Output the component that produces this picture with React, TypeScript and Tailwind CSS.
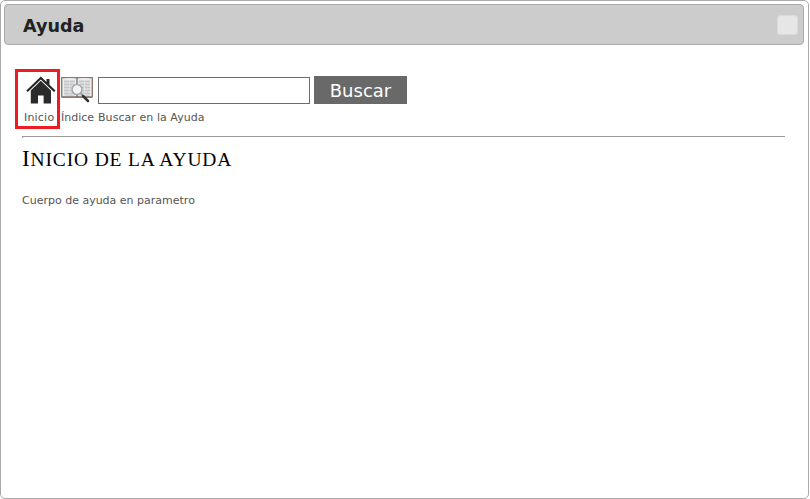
function HomeIcon() {
  return (
    <svg width="30" height="28" viewBox="0 0 30 28" className="block">
      <path d="M14.8 0.5 L20.5 5.9 V3 H23.5 V8.8 L29.5 14.5 L28 16 L14.8 3.6 L1.8 16 L0.4 14.5 Z" fill="#242424" />
      <path d="M14.8 4.8 L25 14.4 V27.6 H17.6 V19.6 H12 V27.6 H4.8 V14.4 Z" fill="#2b2b2b" />
    </svg>
  );
}

function IndexIcon() {
  const rows = [5.5, 8.5, 11.5, 14.5, 17.5];
  return (
    <svg width="32" height="28" viewBox="0 0 32 28" className="block">
      <rect x="0.5" y="1.5" width="31" height="19.5" fill="#c9c3bf" stroke="#92786b" />
      <path d="M2 3 Q9 1 15.5 3 V20 Q9 18.5 2 20 Z" fill="#ededed" />
      <path d="M16.5 3 Q23 1 30 3 V20 Q23 18.5 16.5 20 Z" fill="#ededed" />
      {rows.map((y) => (
        <path key={y} d={`M3 ${y}H8.5 M9 ${y}H14 M18 ${y}H23 M23.5 ${y}H29`} stroke="#c4c6c8" strokeWidth="1.8" />
      ))}
      <path d="M16 1V21" stroke="#7c7068" strokeWidth="1.2" />
      <path d="M1 21.2H31" stroke="#6e6058" />
      <circle cx="16" cy="13.5" r="4.9" fill="#f2f5f7" stroke="#a5a5a5" strokeWidth="1.4" />
      <path d="M19.5 17.2L22 19.7" stroke="#999" strokeWidth="1.6" />
      <path d="M22 20L27 25" stroke="#333" strokeWidth="2.5" strokeLinecap="round" />
    </svg>
  );
}

export default function App() {
  return (
    <div className="h-[499px] w-[810px] bg-white font-['Verdana','DejaVu_Sans',sans-serif]">
      <div className="h-[499px] w-[809px] rounded-[5px] border border-[#aaa] bg-white p-[3px]">
        <header className="flex h-[41px] w-[800px] items-center justify-between rounded-[4px] border border-[#aaa] bg-[#ccc] pr-[5px] pl-[18px]">
          <h1 className="pt-[2px] text-[17.6px] leading-[22px] font-bold text-[#222]">Ayuda</h1>
          <button aria-label="Cerrar" className="h-5 w-[21px] rounded-[3px] border border-[#dadada] bg-[#e6e6e6]" />
        </header>
        <main className="pt-[24px] pl-[11px] text-[11px] text-[#555]">
          <div className="flex h-[60px] items-start whitespace-nowrap">
            <a className="h-[60px] w-[45px] border-3 border-[#ed1c24]">
              <div className="pt-[4px] pl-[8px]"><HomeIcon /></div>
              <span className="mt-[7px] ml-[6px] block w-[31px] leading-[14px] tracking-[0.2px]">Inicio</span>
            </a>
            <a className="w-[38px] pt-[7px]">
              <div className="pl-[1px]"><IndexIcon /></div>
              <span className="mt-[7px] ml-[1px] block leading-[14px]">Índice</span>
            </a>
            <div className="pt-[7px]">
              <div className="flex h-7 gap-[4px]">
                <input aria-label="Buscar en la Ayuda" className="mt-px h-[27px] w-[212px] border border-[#6b6b6b] bg-white px-1" />
                <button className="h-7 w-[93px] bg-[#696969] pt-px text-[18px] leading-[27px] text-white">Buscar</button>
              </div>
              <span className="mt-[7px] block leading-[14px] tracking-[0.06px]">Buscar en la Ayuda</span>
            </div>
          </div>
          <hr className="mt-[7px] ml-[7px] h-[2px] w-[763px] border-t border-l border-[#9a9a9a]" />
          <h2 className="mt-[7px] ml-[7px] text-[23px] leading-7 font-normal tracking-[0.85px] whitespace-nowrap text-black [font-family:'Trajan_Pro','Liberation_Serif',serif]">
            I<span className="text-[19.5px] uppercase">nicio de la ayuda</span>
          </h2>
          <p className="mt-[20px] ml-[7px] leading-[14px]">Cuerpo de ayuda en parametro</p>
        </main>
      </div>
    </div>
  );
}
